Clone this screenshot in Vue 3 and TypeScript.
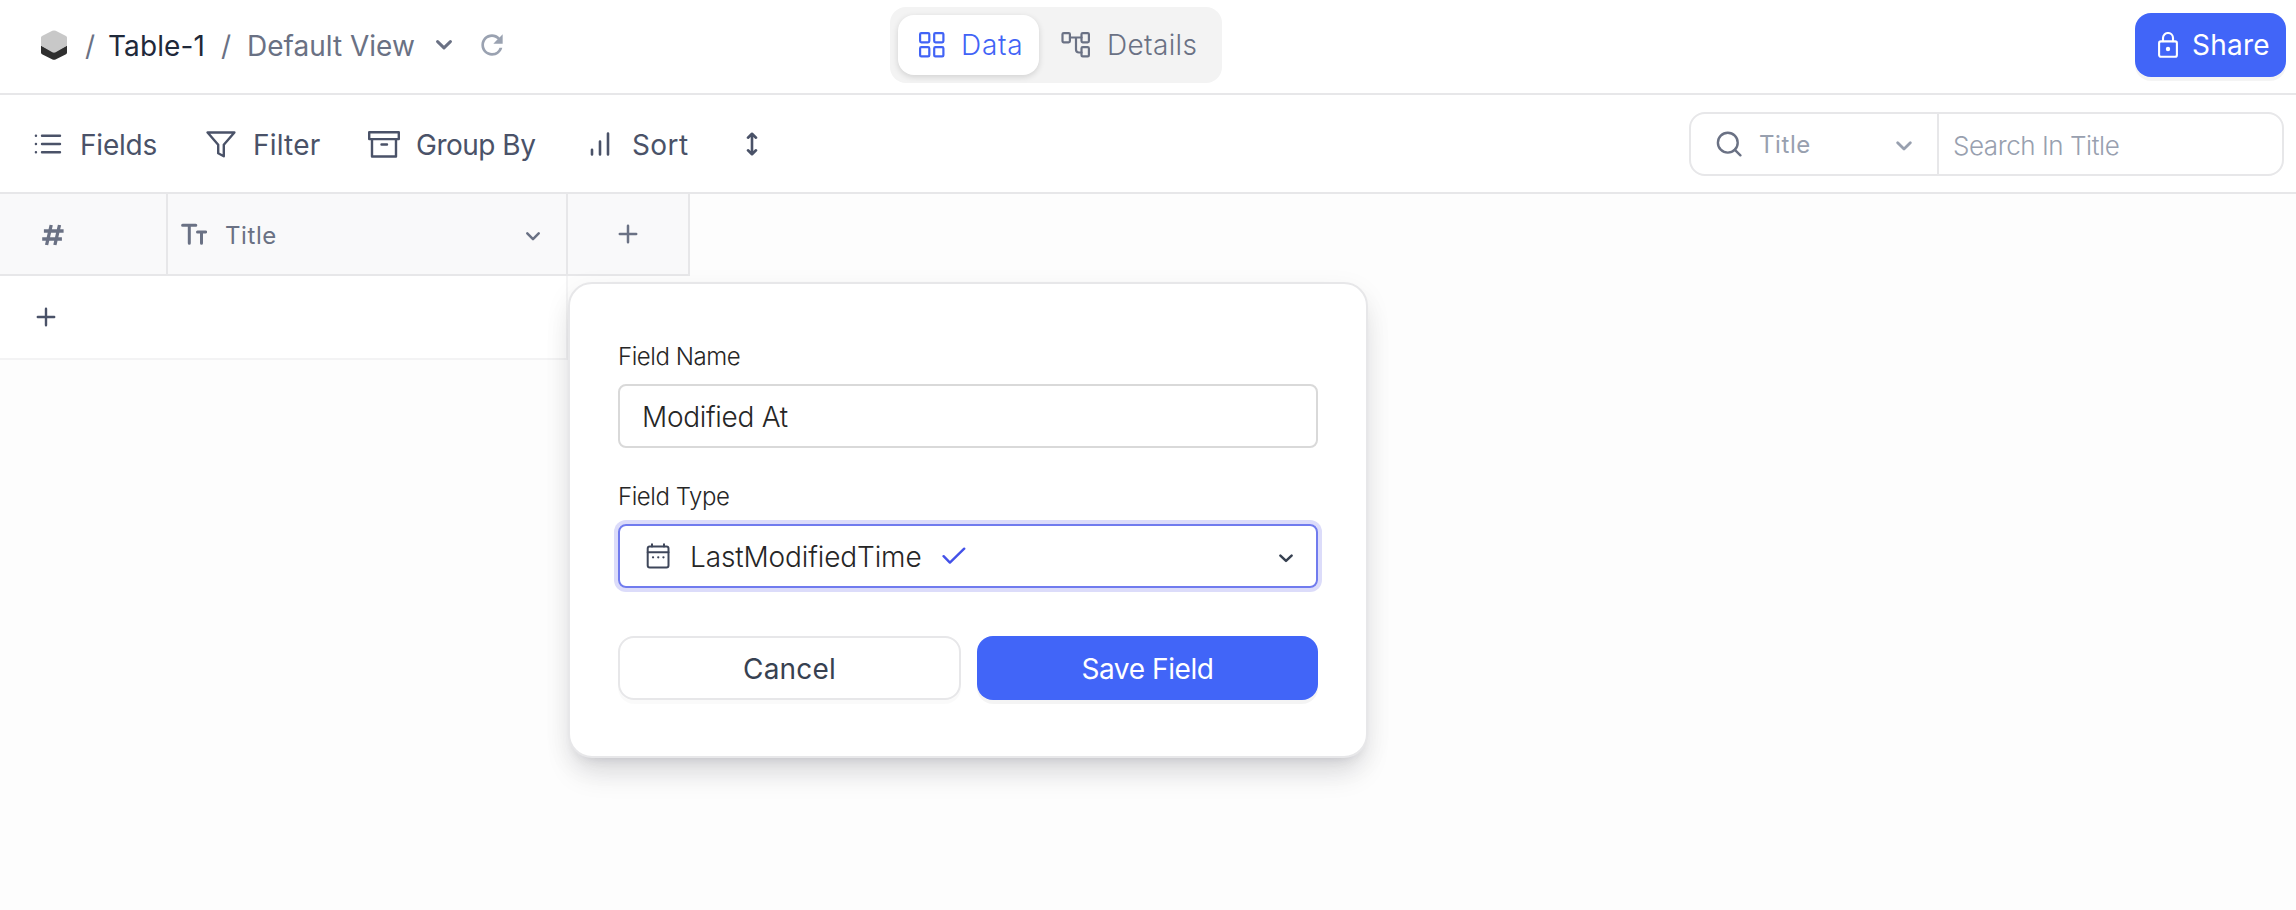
<script setup lang="ts">
import { ref } from 'vue'

const activeTab = ref<'data' | 'details'>('data')
const fieldName = ref('Modified At')
const searchText = ref('')
</script>

<template>
  <div class="page">
    <header class="topbar">
      <nav class="crumbs">
        <svg class="logo" width="26" height="30" viewBox="0 0 26 30">
          <path d="M0 15.5 13 22l13-6.500V22.600q0 1.200-1 1.700l-10.500 5.200q-1.500.7-3 0L1 24.300q-1-.5-1-1.700z" fill="#2f2f2f" />
          <path d="M11.300.8q1.700-.8 3.400 0L25 6q1 .5 1 1.600V15.800L14.700 22.300q-1.700.9-3.400 0L0 15.800V7.600Q0 6.500 1 6z" fill="#c8c8c8" />
        </svg>
        <span class="slash">/</span>
        <span class="table-name">Table-1</span>
        <span class="slash second">/</span>
        <span class="view-name">Default View</span>
        <svg class="line view-caret" width="16" height="10" viewBox="0 0 16 10"><path d="M1.600 1.600 8 7.900l6.400-6.300" stroke-width="3" /></svg>
        <svg class="refresh" width="32" height="32" viewBox="0 0 24 24">
          <path fill="currentColor" d="M17.650 6.350A7.958 7.958 0 0 0 12 4c-4.420 0-7.990 3.580-7.990 8s3.570 8 7.990 8c3.730 0 6.840-2.550 7.730-6h-2.080A5.990 5.990 0 0 1 12 18c-3.310 0-6-2.690-6-6s2.690-6 6-6c1.660 0 3.140.69 4.220 1.780L13 11h7V4l-2.350 2.350z" />
        </svg>
      </nav>

      <div class="tabs">
        <button class="tab tab-data" :class="{ active: activeTab === 'data' }" @click="activeTab = 'data'">
          <svg class="line" width="26" height="26" viewBox="0 0 26 26" stroke-width="2.200">
            <rect x="1.100" y="1.100" width="9.200" height="9.200" rx="1.200" /><rect x="15.200" y="1.100" width="9.200" height="9.200" rx="1.200" />
            <rect x="1.100" y="15.200" width="9.200" height="9.200" rx="1.200" /><rect x="15.200" y="15.200" width="9.200" height="9.200" rx="1.200" />
          </svg>
          <span>Data</span>
        </button>
        <button class="tab tab-details" :class="{ active: activeTab === 'details' }" @click="activeTab = 'details'">
          <svg class="line" width="30" height="26" viewBox="0 0 30 26" stroke-width="2.200">
            <rect x="1.500" y="1.100" width="7.400" height="9.200" rx="1.200" /><rect x="20.500" y="1.100" width="7.400" height="9.200" rx="1.200" />
            <rect x="20.500" y="15.200" width="7.400" height="9.200" rx="1.200" />
            <path d="M9 5.500h11.500M15 5.500v12q0 3 3 3h2.500" />
          </svg>
          <span>Details</span>
        </button>
      </div>

      <button class="share">
        <svg class="line" width="20" height="26" viewBox="0 0 20 26" stroke-width="2.100">
          <rect x="1.100" y="9.400" width="17.800" height="15.400" rx="1.800" />
          <path d="M5 9.200V6a5 5 0 0 1 10 0v3.200" />
          <circle cx="10" cy="17" r="2.200" fill="currentColor" stroke="none" />
        </svg>
        <span>Share</span>
      </button>
    </header>

    <section class="toolbar">
      <button class="tool fields">
        <svg class="line" width="28" height="20" viewBox="0 0 28 20" stroke-width="2.400">
          <path d="M8 1.700h18M8 10h18M8 18.200h18M1.900 1.700h.1M1.900 10h.1M1.900 18.200h.1" />
        </svg>
        <span>Fields</span>
      </button>
      <button class="tool filter">
        <svg class="line" width="30" height="27" viewBox="0 0 30 27" stroke-width="2.400"><path d="M1.600 1.500h26.800L17.800 13.800V25.200L12.200 22.300V13.800z" /></svg>
        <span>Filter</span>
      </button>
      <button class="tool group">
        <svg class="line" width="32" height="27" viewBox="0 0 32 27" stroke-width="2.400">
          <rect x="1.200" y="1.300" width="29.600" height="6.800" /><path d="M4 8.500V25.500h24V8.500M13.500 13.500h5.500" />
        </svg>
        <span>Group By</span>
      </button>
      <button class="tool sort">
        <svg class="line" width="20" height="24" viewBox="0 0 20 24" stroke-width="2.600"><path d="M2 17.700v4.700M10 9.600v12.800M18 1.600v20.800" /></svg>
        <span>Sort</span>
      </button>
      <button class="tool height">
        <svg class="line" width="12" height="24" viewBox="0 0 12 24" stroke-width="2.600"><path d="M6 2v20M2 5.700 6 1.800l4 3.900M2 18.300 6 22.200l4-3.900" /></svg>
      </button>

      <div class="search">
        <div class="search-field">
          <svg class="line lens" width="26" height="26" viewBox="0 0 26 26" stroke-width="2.400"><circle cx="11.800" cy="11.700" r="9.900" /><path d="m18.900 18.800 5.500 5.500" /></svg>
          <span>Title</span>
          <svg class="line search-caret" width="16" height="10" viewBox="0 0 16 10"><path d="M1.700 1.700 8 8l6.300-6.300" stroke-width="2.800" /></svg>
        </div>
        <input v-model="searchText" class="search-input" placeholder="Search In Title" />
      </div>
    </section>

    <main class="grid">
      <div class="grid-head">
        <div class="cell index">
          <svg class="line" width="24" height="22" viewBox="0 0 24 22" stroke-width="3.300"><path d="M2.900 7h19.700M1.200 15h19.700M10.200 1 5.600 21M18.500 1 13.900 21" stroke-linecap="butt" /></svg>
        </div>
        <div class="cell title">
          <svg class="line" width="26" height="22" viewBox="0 0 26 22" stroke-width="3"><path d="M1.600 2.200h13.200M8.300 2.500v17.700M16.500 8.900h8.200M20.500 9v11.200" /></svg>
          <span>Title</span>
          <svg class="line caret" width="14" height="9" viewBox="0 0 14 9"><path d="m1.300 1.400 5.700 5.700 5.700-5.700" stroke-width="2.500" /></svg>
        </div>
        <div class="cell add">
          <svg class="line" width="20" height="20" viewBox="0 0 20 20" stroke-width="2.500"><path d="M10 1.800v16.400M1.800 10h16.400" /></svg>
        </div>
      </div>
      <div class="grid-row">
        <svg class="line" width="20" height="20" viewBox="0 0 20 20" stroke-width="2.400"><path d="M10 1.800v16.400M1.800 10h16.400" /></svg>
      </div>
    </main>

    <form class="popup" @submit.prevent>
      <label class="label" for="field-name">Field Name</label>
      <input id="field-name" v-model="fieldName" class="name-input" />
      <span class="label type-label">Field Type</span>
      <div class="select">
        <svg class="line calendar" width="24" height="26" viewBox="0 0 24 26" stroke-width="2">
          <rect x="1.700" y="3.600" width="20.800" height="21" rx="2" /><path d="M1.700 9.300h20.800M6 1.200v2.400M18 1.200v2.400" />
          <path d="M7 14.300h.1M12.200 14.300h.1M17.400 14.300h.1" stroke-width="2.200" />
        </svg>
        <span>LastModifiedTime</span>
        <svg class="line check" width="24" height="18" viewBox="0 0 24 18"><path d="m1.600 9.200 6.300 6.400L22.200 1.700" stroke-width="2.400" /></svg>
        <svg class="line caret" width="14" height="9" viewBox="0 0 14 9"><path d="m1.400 1.600 5.600 5.300 5.600-5.300" stroke-width="2.500" /></svg>
      </div>
      <div class="actions">
        <button type="button" class="cancel"><span>Cancel</span></button>
        <button type="submit" class="save"><span>Save Field</span></button>
      </div>
    </form>
  </div>
</template>

<style>
body {
  background: #fdfdfd;
}
</style>

<style scoped>
.page {
  position: relative;
  box-sizing: border-box;
  width: 2296px;
  height: 910px;
  overflow: hidden;
  background: #fdfdfd;
  font-family: Inter, "Liberation Sans", sans-serif;
  font-size: 28px;
  line-height: 36px;
}
.page * {
  box-sizing: border-box;
}
button,
input {
  margin: 0;
  padding: 0;
  border: 0;
  outline: 0;
  background: none;
  color: inherit;
  font: inherit;
}
span {
  white-space: nowrap;
}
svg {
  display: block;
  flex: none;
}
.line {
  fill: none;
  stroke: currentColor;
  stroke-linecap: round;
  stroke-linejoin: round;
}

/* Top bar */
.topbar {
  display: flex;
  align-items: center;
  height: 95px;
  padding: 0 10px 3px 41px;
  border-bottom: 2px solid #e7e7e9;
  background: #fff;
}
.crumbs {
  display: flex;
  align-items: center;
  width: 849px;
  color: #6a7184;
}
.slash {
  width: 10px;
  margin: 1px 0 0 18px;
}
.slash.second {
  margin-left: 17px;
}
.table-name {
  width: 96px;
  margin: 1px 0 0 13px;
  color: #1f293a;
  font-weight: 440;
  letter-spacing: 0.1px;
}
.view-name {
  width: 168px;
  margin: 1px 0 0 16px;
}
.view-caret {
  margin-left: 21px;
}
.refresh {
  margin-left: 24px;
  color: #9aa2b1;
}
.tabs {
  display: flex;
  align-items: center;
  width: 332px;
  height: 76px;
  padding: 8px;
  border-radius: 16px;
  background: #f3f3f3;
}
.tab {
  display: flex;
  align-items: center;
  height: 60px;
  border-radius: 16px;
  color: #6a7184;
  font-weight: 350;
}
.tab.active {
  background: #fff;
  box-shadow: 0 2px 6px rgba(0, 0, 0, 0.14);
  color: #4163f6;
}
.tab-data {
  width: 141px;
  padding-left: 21px;
  letter-spacing: 0.75px;
}
.tab-data span {
  margin-left: 16px;
}
.tab-details {
  width: 175px;
  padding-left: 22px;
  letter-spacing: 0.35px;
}
.tab-details span {
  margin-left: 16px;
}
.share {
  display: flex;
  align-items: center;
  width: 151px;
  height: 64px;
  margin-left: auto;
  padding-left: 23px;
  border-radius: 16px;
  background: #4165f8;
  box-shadow: 0 4px 0 rgba(0, 0, 0, 0.043);
  color: #fff;
  font-weight: 420;
  letter-spacing: 0.25px;
}
.share span {
  margin-left: 14px;
}

/* Toolbar */
.toolbar {
  display: flex;
  align-items: center;
  height: 99px;
  padding: 1px 12px 0 34px;
  border-bottom: 2px solid #e7e7e9;
  background: #fff;
  color: #4a5268;
}
.tool {
  display: flex;
  align-items: center;
}
.tool span {
  margin-top: 2px;
}
.fields {
  width: 172px;
  letter-spacing: -0.2px;
}
.fields span {
  margin-left: 18px;
}
.filter {
  width: 162px;
  letter-spacing: 0.2px;
}
.filter span {
  margin-left: 17px;
}
.group {
  width: 222px;
  letter-spacing: -0.5px;
}
.group span {
  margin-left: 16px;
}
.sort {
  width: 156px;
  letter-spacing: 0.4px;
}
.sort span {
  margin-left: 22px;
}
.search {
  display: flex;
  width: 595px;
  height: 64px;
  margin-left: auto;
  border: 2px solid #e7e7e9;
  border-radius: 16px;
}
.search-field {
  display: flex;
  align-items: center;
  width: 248px;
  padding-left: 25px;
  border-right: 2px solid #e7e7e9;
  color: #98a0af;
  font-size: 24px;
  letter-spacing: 0.6px;
}
.lens {
  color: #6a7184;
}
.search-field span {
  margin: 2px 0 0 17px;
}
.search-caret {
  margin: 4px 25px 0 auto;
}
.search-input {
  width: 330px;
  padding: 3px 0 0 14px;
  color: #4a5268;
  font-size: 26px;
  font-weight: 350;
  letter-spacing: -0.45px;
}
.search-input::placeholder {
  color: #98a0af;
  opacity: 1;
}

/* Table */
.grid {
  color: #6a7184;
}
.grid-head {
  display: flex;
  width: 690px;
  height: 82px;
}
.cell {
  display: flex;
  align-items: center;
  border: solid #e7e7e9;
  border-width: 0 2px 2px 0;
  background: #f9f9fa;
}
.index {
  width: 168px;
  padding: 2px 0 0 41px;
}
.title {
  width: 400px;
  padding-left: 13px;
}
.title span {
  margin: 3px 0 0 18px;
  font-size: 24px;
  letter-spacing: 0.6px;
}
.title .caret {
  margin: 4px 26px 0 auto;
}
.add {
  width: 122px;
  padding-left: 50px;
}
.grid-row {
  display: flex;
  align-items: center;
  width: 568px;
  height: 84px;
  padding-left: 36px;
  border: solid #f3f3f4;
  border-width: 0 2px 2px 0;
  background: #fff;
  color: #4a5268;
}

/* Add-field popup, floating over the table */
.popup {
  position: absolute;
  top: 282px;
  left: 568px;
  display: flex;
  flex-direction: column;
  width: 800px;
  height: 476px;
  padding: 48px;
  border: 2px solid #e7e7e9;
  border-radius: 24px;
  background: #fff;
  box-shadow: 0 20px 30px -6px rgba(16, 18, 36, 0.12), 0 8px 12px -8px rgba(16, 18, 36, 0.12), 0 8px 28px rgba(16, 18, 36, 0.06);
  color: #262626;
  font-weight: 345;
}
.label {
  height: 48px;
  margin-bottom: 4px;
  font-size: 24px;
  line-height: 49px;
  letter-spacing: -0.45px;
}
.type-label {
  margin-top: 24px;
}
.name-input {
  height: 64px;
  padding: 2px 22px 0 22px;
  border: 2px solid #d9d9d9;
  border-radius: 8px;
  letter-spacing: -0.3px;
}
.select {
  display: flex;
  align-items: center;
  height: 64px;
  padding: 0 23px 0 26px;
  border: 2px solid #707bee;
  border-radius: 8px;
  box-shadow: 0 0 0 4px #dcdcfa;
  letter-spacing: -0.12px;
}
.calendar {
  color: #3e465a;
}
.select span {
  margin: 1px 0 0 20px;
}
.check {
  margin-left: 20px;
  color: #4351e8;
}
.select .caret {
  margin: 4px 0 0 auto;
  color: #374151;
}
.actions {
  display: grid;
  grid-template-columns: 343px 341px;
  justify-content: space-between;
  height: 64px;
  margin-top: 48px;
}
.cancel,
.save {
  padding-top: 1px;
  border-radius: 16px;
  font-weight: 420;
  text-align: center;
}
.cancel {
  border: 2px solid #e7e7e9;
  box-shadow: 0 4px 0 rgba(0, 0, 0, 0.02);
  color: #374151;
  letter-spacing: 0.2px;
}
.save {
  background: #4165f8;
  box-shadow: 0 4px 0 rgba(0, 0, 0, 0.043);
  color: #fff;
  letter-spacing: -0.4px;
}
</style>
